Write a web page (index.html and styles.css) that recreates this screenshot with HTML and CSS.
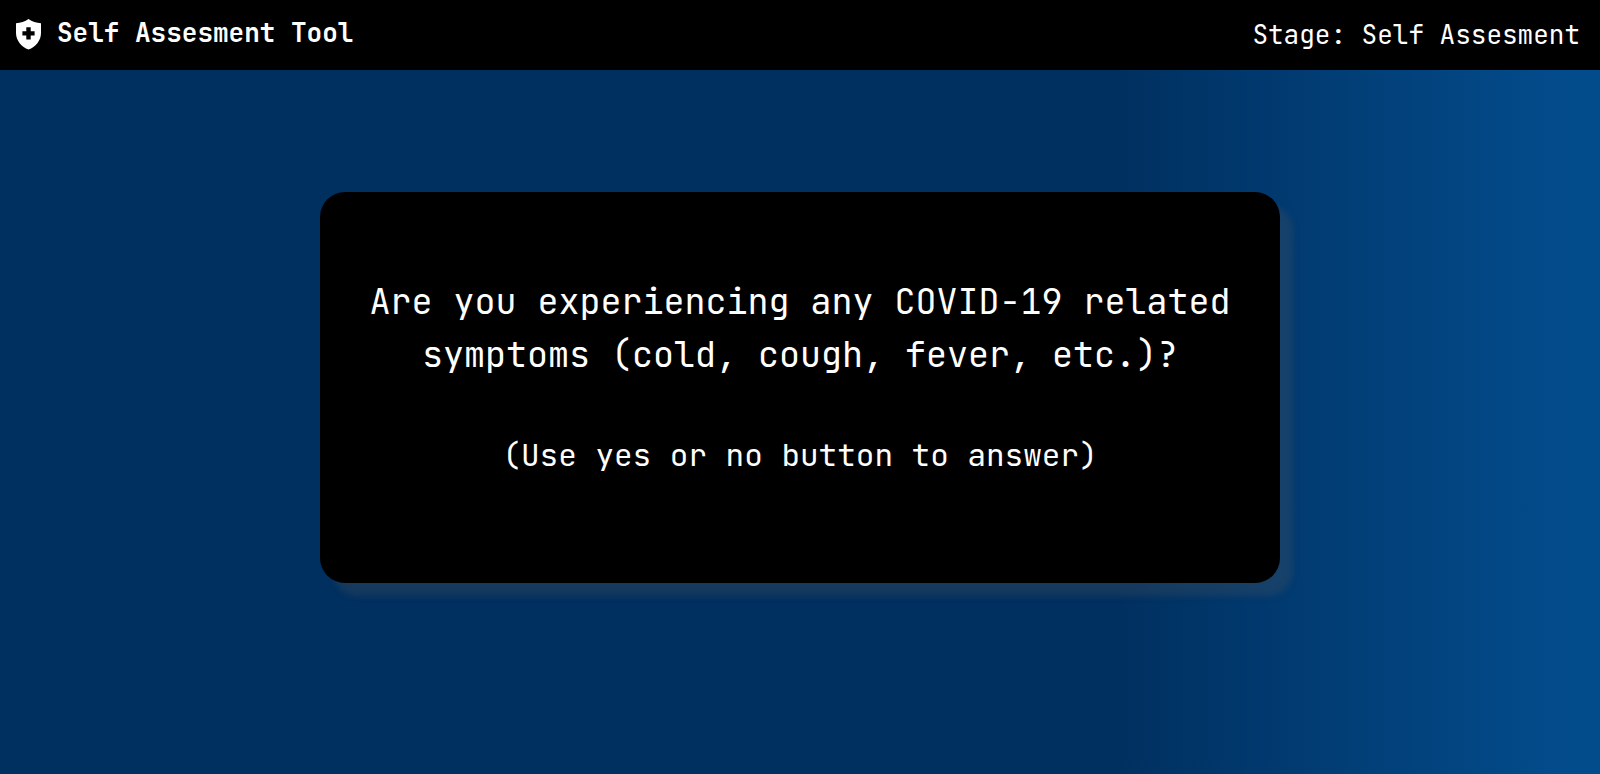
FILE: index.html
```html
<!DOCTYPE html>
<html lang="en">
<head>
<meta charset="utf-8">
<meta name="viewport" content="width=device-width, initial-scale=1">
<title>Self Assesment Tool</title>
<link rel="stylesheet" href="styles.css">
</head>
<body>
<header class="topbar">
  <div class="brand">
    <svg class="brand-icon" viewBox="0 0 26 32" aria-hidden="true">
      <path fill="#fff" fill-rule="evenodd" d="M13.500 1 C17 3.500 21.500 5 26 5.200 V15 C26 22.500 20.500 29 13.500 31.500 C6.500 29 1 22.500 1 15 V5.200 C5.500 5 10 3.500 13.500 1 Z M11.300 9.300 V13.200 H7.400 V17.600 H11.300 V21.500 H15.700 V17.600 H19.600 V13.200 H15.700 V9.300 Z"/>
    </svg>
    <h1 class="brand-name">Self Assesment Tool</h1>
  </div>
  <p class="stage">Stage: Self Assesment</p>
</header>
<main class="content">
  <section class="card">
    <h2 class="question">Are you experiencing any COVID-19 related symptoms (cold, cough, fever, etc.)?</h2>
    <p class="hint">(Use yes or no button to answer)</p>
  </section>
</main>
</body>
</html>
```
FILE: styles.css
```css
* {
  box-sizing: border-box;
  margin: 0;
}

body {
  display: flex;
  flex-direction: column;
  min-height: 100vh;
  color: #fff;
  font-family: "JetBrains Mono", "DejaVu Sans Mono", monospace;
  background: linear-gradient(to right, #003060 70%, #034c8c 98%);
}

.topbar {
  display: flex;
  justify-content: space-between;
  align-items: flex-start;
  padding: 16px 20px 18px 15px;
  background: #000;
}

.brand {
  display: flex;
  align-items: flex-start;
  gap: 16px;
}

.brand-icon {
  width: 26px;
  height: 32px;
  margin-top: 2px;
}

.brand-name,
.stage {
  font-size: 26px;
  line-height: 34px;
}

.brand-name {
  font-weight: 600;
}

.stage {
  padding-top: 2px;
}

.content {
  flex: 1;
  display: flex;
  justify-content: center;
  align-items: center;
  padding-bottom: 70px;
}

.card {
  width: 60%;
  padding: 83px 40px 105px;
  text-align: center;
  background: #000;
  border-radius: 25px;
  box-shadow: 13px 13px 6px rgba(88, 88, 88, 0.25);
}

.question {
  font-size: 35px;
  font-weight: 400;
  line-height: 53px;
}

.hint {
  margin-top: 51px;
  font-size: 31px;
  line-height: 46px;
}
```
